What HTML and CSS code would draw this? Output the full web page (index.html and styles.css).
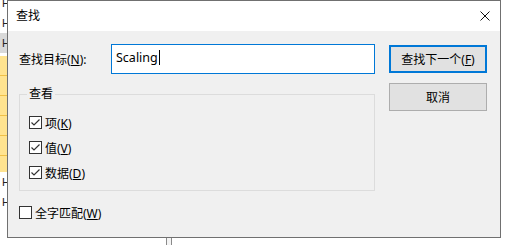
FILE: index.html
```html
<!DOCTYPE html>
<html lang="zh-CN">
<head>
  <meta charset="UTF-8" />
  <title>查找</title>
  <link rel="stylesheet" href="styles.css">
</head>
<body>

<!-- ventana de fondo -->
<div class="backdrop">
  <div class="tree">
    <div class="row"><span class="mark">H</span></div>
    <div class="row"><span class="mark">H</span></div>
    <div class="row sel"><span class="mark">H</span></div>
    <div class="gap"></div>
    <div class="hit"></div>
    <div class="hit"></div>
    <div class="hit"></div>
    <div class="hit"></div>
    <div class="hit"></div>
    <div class="hit last"></div>
    <div class="row"><span class="mark">H</span></div>
    <div class="row"><span class="mark">H</span></div>
  </div>
  <div class="splitter"></div>
  <div class="pane"></div>
</div>

<!-- Dialogo -->
<div class="dialog">
  <div class="titlebar">
    <span class="title">查找</span>
    <svg class="close" width="10" height="10" viewBox="0 0 10 10">
      <path d="M0.5 0.5 L9.5 9.5 M9.5 0.5 L0.5 9.5" stroke="#111" stroke-width="1" fill="none"/>
    </svg>
  </div>

  <div class="content">
    <div class="left">
      <div class="find-row">
        <label class="find-label">查找目标(<u>N</u>):</label>
        <div class="input">Scaling<span class="caret"></span></div>
      </div>

      <div class="group">
        <span class="legend">查看</span>
        <div class="check-row">
          <span class="box checked"><svg width="11" height="11" viewBox="0 0 11 11"><path d="M1.5 5.5 L4 8 L9.5 2.5" stroke="#333" stroke-width="1.2" fill="none"/></svg></span>
          <span>项(<u>K</u>)</span>
        </div>
        <div class="check-row">
          <span class="box checked"><svg width="11" height="11" viewBox="0 0 11 11"><path d="M1.5 5.5 L4 8 L9.5 2.5" stroke="#333" stroke-width="1.2" fill="none"/></svg></span>
          <span>值(<u>V</u>)</span>
        </div>
        <div class="check-row">
          <span class="box checked"><svg width="11" height="11" viewBox="0 0 11 11"><path d="M1.5 5.5 L4 8 L9.5 2.5" stroke="#333" stroke-width="1.2" fill="none"/></svg></span>
          <span>数据(<u>D</u>)</span>
        </div>
      </div>

      <div class="check-row whole">
        <span class="box"></span>
        <span>全字匹配(<u>W</u>)</span>
      </div>
    </div>

    <div class="right">
      <button class="btn default">查找下一个(<u>F</u>)</button>
      <button class="btn">取消</button>
    </div>
  </div>
</div>

</body>
</html>
```

FILE: styles.css
```css
    body {
      margin: 0;
      background-color: white;
      overflow: hidden;
      font-family: "Noto Sans", "Noto Sans CJK SC", sans-serif;
      font-size: 12px;
      color: #000;
    }

    /* fondo: editor del registro */
    .backdrop {
      display: flex;
      width: 508px;
      height: 245px;
    }
    .tree {
      width: 166px;
      margin-top: -7px;
    }
    .row {
      height: 20px;
      display: flex;
      align-items: center;
    }
    .row.sel {
      background-color: #d9d9d9;
    }
    .mark {
      margin-left: 2px;
      font-family: "Liberation Sans", sans-serif;
      font-size: 11px;
      line-height: 1;
      color: #222;
    }
    .gap {
      height: 3px;
    }
    .hit {
      height: 19px;
      background-color: #ffe38f;
      border-bottom: 1px solid #efc048;
    }
    .hit.last {
      height: 16px;
      border-bottom: none;
    }
    .splitter {
      width: 4px;
      border-left: 1px solid #8a8a8a;
      border-right: 1px solid #8a8a8a;
      background-color: #f4f4f4;
    }
    .pane {
      flex: 1;
    }

    /* ventana del dialogo */
    .dialog {
      position: absolute;
      top: 0;
      left: 7px;
      width: 494px;
      height: 238px;
      box-sizing: border-box;
      border: 1px solid #707070;
      background-color: #f0f0f0;
      display: flex;
      flex-direction: column;
    }
    .titlebar {
      height: 30px;
      background-color: white;
      display: flex;
      align-items: center;
      justify-content: space-between;
      padding: 0 10px 0 8px;
    }
    .title {
      line-height: 1;
    }
    .close {
      display: block;
    }

    .content {
      display: flex;
      gap: 14px;
      padding: 13px 0 0 11px;
    }
    .left {
      width: 356px;
    }
    .find-row {
      display: flex;
      align-items: center;
    }
    .find-label {
      width: 92px;
    }
    .input {
      width: 264px;
      height: 30px;
      box-sizing: border-box;
      border: 1px solid #0078d7;
      background-color: white;
      padding: 0 0 3px 4px;
      display: flex;
      align-items: center;
      font-size: 12.5px;
    }
    .caret {
      display: inline-block;
      width: 1px;
      height: 15px;
      margin-left: 1px;
      background-color: #000;
    }

    .group {
      position: relative;
      margin-top: 20px;
      height: 97px;
      box-sizing: border-box;
      border: 1px solid #dcdcdc;
      padding: 21px 0 0 9px;
      display: flex;
      flex-direction: column;
      gap: 12px;
    }
    .legend {
      position: absolute;
      top: -9px;
      left: 7px;
      padding: 0 2px;
      background-color: #f0f0f0;
      line-height: 16px;
    }
    .check-row {
      display: flex;
      align-items: center;
      gap: 3px;
      height: 13px;
    }
    .box {
      width: 13px;
      height: 13px;
      box-sizing: border-box;
      border: 1px solid #333;
      background-color: white;
      display: flex;
      align-items: center;
      justify-content: center;
    }
    .box svg {
      display: block;
    }
    .whole {
      margin-top: 15px;
    }

    .right {
      width: 98px;
      padding-top: 1px;
      display: flex;
      flex-direction: column;
      gap: 10px;
    }
    .btn {
      height: 28px;
      box-sizing: border-box;
      border: 1px solid #adadad;
      background-color: #e1e1e1;
      font-family: "Noto Sans", "Noto Sans CJK SC", sans-serif;
      font-size: 12px;
      color: #000;
      padding: 0;
    }
    .btn.default {
      border: 2px solid #0078d7;
    }
```
